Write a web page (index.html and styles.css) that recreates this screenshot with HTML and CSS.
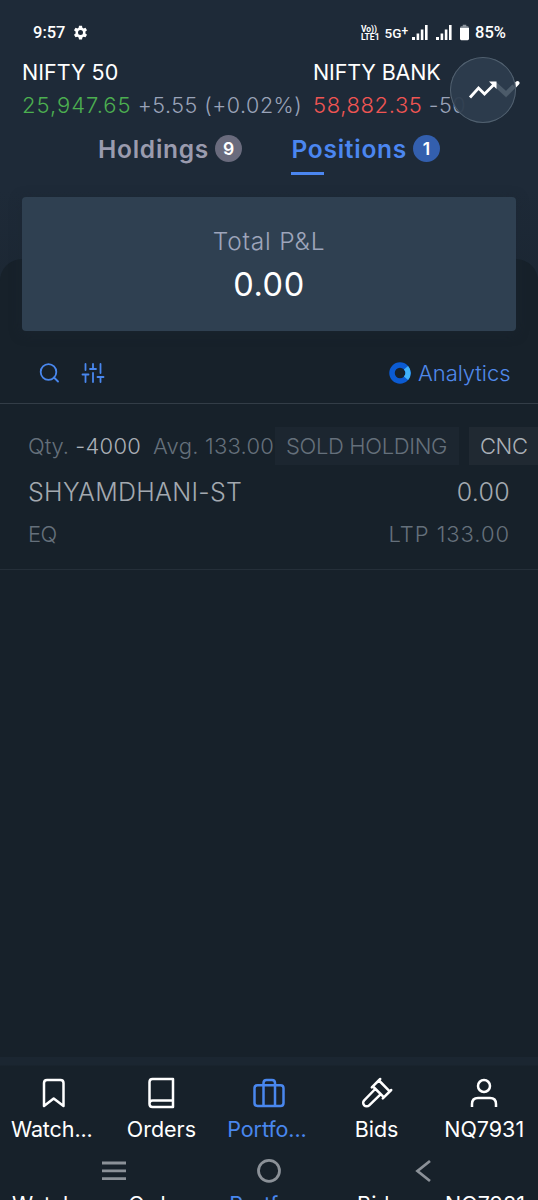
FILE: index.html
```
<!DOCTYPE html>
<html lang="en">
<head>
<meta charset="utf-8">
<title>Portfolio</title>
<link rel="stylesheet" href="styles.css">
</head>
<body>
<div class="app">
  <header class="status">
    <div class="status-left">
      <span class="clock">9:57</span>
      <svg class="gear" viewBox="0 0 24 24"><path fill="#fff" fill-rule="evenodd" d="M9.600 1h4.800l.6 3.200 2 1.200 3-1.100 2.400 4.100-2.500 2.100v3l2.500 2.100-2.400 4.100-3-1.100-2 1.200-.6 3.200H9.600l-.6-3.200-2-1.200-3 1.100-2.400-4.100 2.500-2.100v-3L1.600 8.400 4 4.300l3 1.100 2-1.200zM12 8a4 4 0 1 0 0 8 4 4 0 0 0 0-8z"/></svg>
    </div>
    <div class="status-right">
      <span class="volte"><b>Vo))</b><b>LTE1</b></span>
      <span class="net">5G<sup>+</sup></span>
      <svg class="signal first" viewBox="0 0 16 15"><path fill="#fff" d="M0 12h3v3H0zM4.600 8.500h2.600V15H4.600zM8.800 4.500h2.600V15H8.800zM13 0h2.600v15H13z"/></svg>
      <svg class="signal second" viewBox="0 0 16 15"><path fill="#fff" d="M0 12h3v3H0zM4.600 8.500h2.600V15H4.600zM8.800 4.500h2.600V15H8.800zM13 0h2.600v15H13z"/></svg>
      <svg class="battery" viewBox="0 0 10 17"><path fill="#8b939c" d="M3 0h4v1.500h1.500Q10 1.500 10 4H0Q0 1.500 1.500 1.500H3z"/><path fill="#fff" d="M0 3.500h10V15.500q0 1.500-1.500 1.500h-7Q0 17 0 15.500z"/></svg>
      <span class="percent">85%</span>
    </div>
  </header>

  <section class="tickers">
    <div class="ticker">
      <div class="ticker-name">NIFTY 50</div>
      <div class="ticker-value"><span class="up">25,947.65</span> <span class="change">+5.55 (+0.02%)</span></div>
    </div>
    <div class="ticker">
      <div class="ticker-name bank">NIFTY BANK</div>
      <div class="ticker-value"><span class="down">58,882.35</span> <span class="change">-50</span></div>
    </div>
    <svg class="chevron" viewBox="0 0 34 24"><path fill="none" stroke="#fff" stroke-width="4" stroke-linecap="round" d="M6 4l12 12L29.500 4"/></svg>
    <div class="float-button">
      <svg viewBox="0 0 66 66"><path fill="none" stroke="#4c5b6a" stroke-width="4.500" d="M45 27l11 10 8-8"/><path fill="none" stroke="#fff" stroke-width="2.800" d="M20 40.500l8.500-9.500 6 6L45.500 26"/><path fill="#fff" d="M39 24.500h7.500V32z"/></svg>
    </div>
  </section>

  <nav class="tabs">
    <div class="tab"><span class="tab-text">Holdings</span><span class="count">9</span></div>
    <div class="tab active"><span class="tab-text">Positions</span><span class="count">1</span></div>
  </nav>

  <main class="sheet">
    <section class="summary">
      <div class="summary-label">Total P&amp;L</div>
      <div class="summary-value">0.00</div>
    </section>
    <div class="toolbar">
      <svg class="search" viewBox="0 0 20 20"><g fill="none" stroke="#4987ee" stroke-width="1.800" stroke-linecap="round"><circle cx="9.500" cy="9" r="7.800"/><path d="M15 14.500L19 18.500"/></g></svg>
      <svg class="sliders" viewBox="0 0 24 22"><path fill="none" stroke="#4987ee" stroke-width="1.800" stroke-linecap="round" d="M4.500 2v6M4.500 12.500V20M1.500 12.500h6M12 2v5M9 7h6M12 11v9M19.500 2v9M19.500 15v5M16.500 15H22.500"/></svg>
      <svg class="donut" viewBox="0 0 22 22"><circle cx="11" cy="11" r="8" fill="none" stroke="#0b5bd3" stroke-width="5.500"/><path fill="none" stroke="#41b3fa" stroke-width="5.500" d="M17 5.700a8 8 0 0 1 0 10.600"/></svg>
      <span class="analytics">Analytics</span>
    </div>
    <article class="position">
      <div class="line meta">
        <span class="qty">Qty. <b>-4000</b></span><span class="avg">Avg. 133.00</span><span class="tag sold">SOLD HOLDING</span><span class="tag cnc">CNC</span>
      </div>
      <div class="line main"><span class="symbol">SHYAMDHANI-ST</span><span class="pnl">0.00</span></div>
      <div class="line sub"><span class="exch">EQ</span><span class="ltp">LTP 133.00</span></div>
    </article>
  </main>

  <footer class="bottom">
    <div class="nav-items">
      <div class="nav-item">
        <svg viewBox="0 0 32 32"><path d="M6 29V6q0-3 3-3h13.500q3 0 3 3v23l-9.800-7.500z"/></svg>
        <span class="watch">Watch...</span>
      </div>
      <div class="nav-item">
        <svg viewBox="0 0 32 32"><path d="M28 23.500H7.500Q4.500 23.500 4.500 26.500M28 23.500V30H7.500q-3 0-3-3V5q0-3 3-3H28z"/></svg>
        <span class="orders">Orders</span>
      </div>
      <div class="nav-item current">
        <svg viewBox="0 0 32 32"><path d="M4.500 8.300h23q3 0 3 3v14.700q0 3-3 3h-23q-3 0-3-3V11.300q0-3 3-3zM10.500 29V6q0-3 3-3h5.500q3 0 3 3v23"/></svg>
        <span class="portfolio">Portfo...</span>
      </div>
      <div class="nav-item">
        <svg viewBox="0 0 32 32"><path stroke-linecap="round" d="M19.200 2L10.800 10.400M30.200 13L21.800 21.400M18 3.500L28.700 14.300M12 9.500L22.800 20.200M14.200 12L3.200 23.300a3.500 3.500 0 0 0 5 5L19.800 17.200"/></svg>
        <span class="bids">Bids</span>
      </div>
      <div class="nav-item">
        <svg viewBox="0 0 32 32"><circle cx="16" cy="9" r="6"/><path d="M4 30v-3q0-6 6-6h12q6 0 6 6v3"/></svg>
        <span class="user">NQ7931</span>
      </div>
    </div>
    <div class="system">
      <svg viewBox="0 0 26 26"><path d="M1 5h24M1 12.800h24M1 20.600h24"/></svg>
      <svg viewBox="0 0 26 26"><circle cx="13" cy="12.800" r="10.500"/></svg>
      <svg viewBox="0 0 26 26"><path d="M19 3L6.500 13L19 23"/></svg>
    </div>
    <div class="repeat">
      <span class="watch">Watch...</span><span class="orders">Orders</span><span class="portfolio current">Portfo...</span><span class="bids">Bids</span><span class="user">NQ7981</span>
    </div>
  </footer>
</div>
</body>
</html>
```

FILE: styles.css
```
* { box-sizing: border-box; }
body { margin: 0; background: #17212a; }
svg { display: block; flex: none; }
.app {
  width: 538px; height: 1200px; overflow: hidden;
  display: flex; flex-direction: column;
  background: linear-gradient(#1e2a38 0, #1e2a38 190px, #1b2631 330px);
  font-family: Inter, "Liberation Sans", sans-serif;
  font-size: 22px; color: #fff; white-space: nowrap;
}
.status {
  height: 57px; padding: 8px 32px 0 33px;
  display: flex; justify-content: space-between; align-items: center;
  font: 500 16.500px/20px Roboto, sans-serif;
}
.status-left, .status-right { display: flex; align-items: center; }
.gear { width: 15px; height: 15px; margin-left: 8px; }
.volte { display: flex; flex-direction: column; font: 700 8.500px/8px Roboto, sans-serif; }
.volte b { font-weight: 700; }
.net { margin-left: 5px; font-size: 13.500px; font-weight: 500; }
.net sup { font-size: 12px; line-height: 0; vertical-align: 3px; }
.signal { width: 16px; height: 15px; }
.first { margin-left: 4px; }
.second { margin-left: 8px; }
.battery { width: 9px; height: 17px; margin-left: 8px; }
.percent { margin-left: 6px; }

.tickers {
  position: relative; height: 66px; padding-left: 22px;
  display: flex;
}
.ticker { flex: none; width: 291px; }
.ticker + .ticker { width: 225px; overflow: hidden; }
.ticker-name { height: 31px; line-height: 31px; font-size: 21.500px; }
.bank { letter-spacing: -.15px; }
.ticker-value { height: 35px; line-height: 35px; font-size: 22px; font-weight: 300; letter-spacing: 1px; word-spacing: -1px; }
.up { color: #4caf50; }
.down { color: #f05553; letter-spacing: .6px; }
.change { color: #9aa3b8; font-size: 21.500px; letter-spacing: .5px; word-spacing: 0; }
.chevron { position: absolute; left: 488px; top: 22px; width: 34px; height: 24px; }
.float-button {
  position: absolute; left: 450px; top: 0; width: 66px; height: 66px;
  border-radius: 50%; background: #2d3c4df2; box-shadow: inset 0 0 0 1px #526170;
}

.tabs {
  height: 52px; padding: 10px 98px 0 98px;
  display: flex; justify-content: space-between; align-items: flex-start;
}
.tab { display: flex; align-items: center; gap: 6px; height: 43px; padding-bottom: 12px; color: #9a9bae; }
.tab-text { font-size: 24.500px; font-weight: 600; letter-spacing: .75px; }
.count {
  width: 27px; height: 27px; border-radius: 50%; background: #6a6b7d;
  color: #fff; font-size: 17.500px; font-weight: 600; line-height: 27px; text-align: center;
}
.active { color: #4b86f0; background: linear-gradient(#4b86f0, #4b86f0) 0 calc(100% - 1px) / 33px 3px no-repeat; }
.active .count { background: #335fae; }

.sheet {
  flex: 1; margin-top: 84px; border-radius: 22px 22px 0 0; background: #17212a;
}
.summary {
  height: 134px; margin: -62px 22px 0; padding-top: 22px;
  border-radius: 4px; background: #2f4051; text-align: center;
  box-shadow: 0 2px 12px #1b263180;
}
.summary-label { height: 43px; line-height: 44px; font-size: 24.500px; font-weight: 300; letter-spacing: .8px; color: #9ea5bb; }
.summary-value { height: 44px; line-height: 46px; font-size: 32.500px; letter-spacing: .6px; }
.toolbar {
  height: 73px; padding: 12px 28px 0 39px; border-bottom: 1px solid #333d47;
  display: flex; align-items: center;
}
.search { width: 20px; height: 20px; }
.sliders { width: 24px; height: 22px; margin-left: 22px; }
.donut { width: 22px; height: 22px; margin-left: auto; margin-right: 7px; }
.analytics { width: 92px; color: #5089ea; font-weight: 300; letter-spacing: -.05px; }
.position { height: 166px; padding-top: 20px; border-bottom: 1px solid #252f39; }
.line { display: flex; padding: 0 28px; align-items: center; justify-content: space-between; color: #65707b; font-weight: 300; letter-spacing: .5px; }
.meta { height: 44px; justify-content: flex-start; padding-right: 0; }
.qty { width: 125px; letter-spacing: -.05px; }
.meta b { font-weight: 300; color: #aab0b7; letter-spacing: .3px; }
.avg { width: 122px; letter-spacing: .25px; }
.tag { height: 38px; line-height: 38px; background: #1c2630; }
.sold { width: 184px; padding-left: 11px; letter-spacing: -.33px; }
.cnc { margin-left: 10px; padding-left: 11px; width: 69px; background: #202932; color: #aab0b7; letter-spacing: -.4px; }
.main { height: 47px; font-size: 25px; color: #a3a9b0; letter-spacing: .3px; }
.sub { height: 38px; }
.exch { letter-spacing: -.6px; }
.ltp { letter-spacing: .95px; }

.bottom { height: 143px; padding-top: 8px; background: linear-gradient(#1b2631, #1b2631 8px, #17212a 9px); }
.nav-items { height: 87px; display: flex; }
.nav-item { flex: 1 1 0; display: flex; flex-direction: column; align-items: center; padding-top: 12px; }
.nav-item svg { width: 32px; height: 32px; fill: none; stroke: #fff; stroke-width: 2.500; stroke-linejoin: round; }
.nav-item span { line-height: 26px; margin-top: 7px; font-size: 21.500px; }
.nav-item .watch, .nav-item .portfolio { margin-right: 4px; letter-spacing: -.1px; }
.current { color: #4987ee; }
.nav-item.current svg { stroke: #4987ee; }
.system { height: 38px; padding: 0 101px; display: flex; justify-content: space-between; align-items: center; }
.system svg { width: 26px; height: 26px; fill: none; stroke: #8b9198; stroke-width: 2.800; }
.repeat { height: 10px; display: flex; overflow: hidden; font-size: 21.500px; line-height: 28px; }
.repeat span { flex: 1 0 0; width: 0; text-align: center; }
.repeat .watch, .repeat .portfolio { padding-right: 4px; letter-spacing: -.1px; }
```
